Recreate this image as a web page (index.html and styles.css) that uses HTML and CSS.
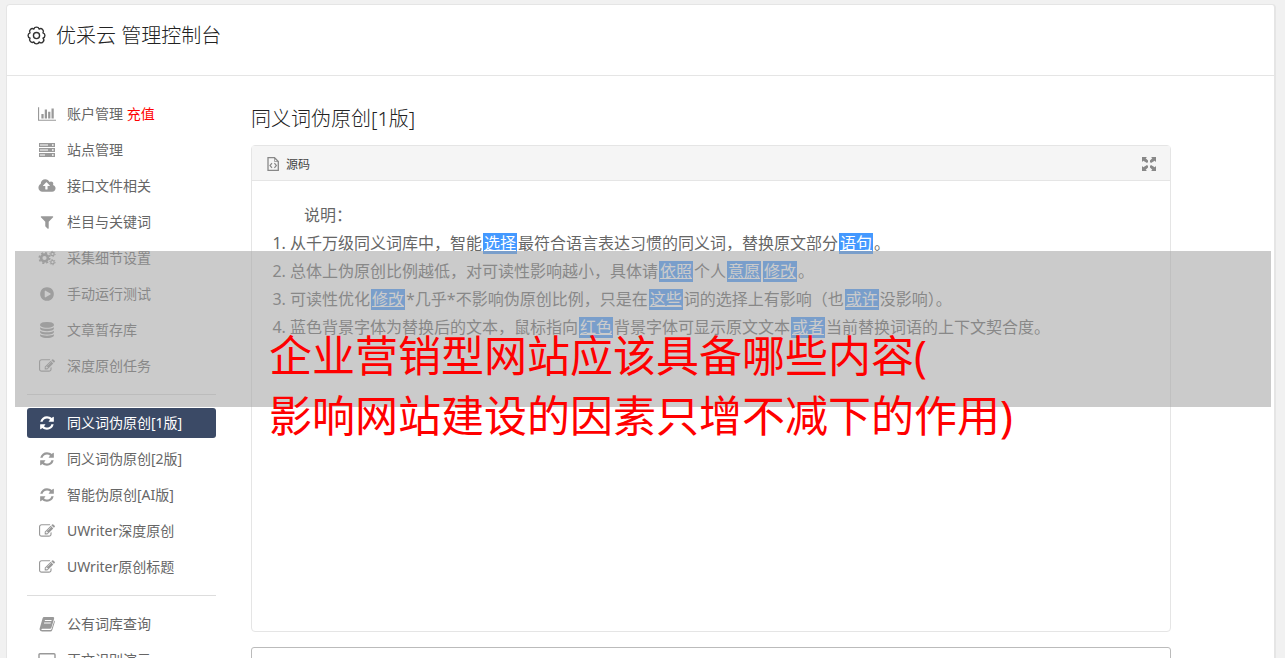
FILE: index.html
```html
<!DOCTYPE html>
<html lang="zh-CN">
<head>
    <meta charset="UTF-8">
    <meta name="viewport" content="width=device-width, initial-scale=1.0">
    <title>优采云 管理控制台</title>
    <link rel="stylesheet" href="styles.css">
</head>
<body>
<svg class="sprite" aria-hidden="true">
    <symbol id="chart" viewBox="0 0 2048 1792"><path d="M640 896v512h-256v-512h256zm384-512v1024h-256v-1024h256zm1024 1152v128h-2048v-1536h128v1408h1920zm-640-896v768h-256v-768h256zm384-384v1152h-256v-1152h256z"/></symbol>
    <symbol id="server" viewBox="0 0 18 16"><path fill-rule="evenodd" d="M1 1h16v4H1zM2 2.4h8v1.2H2zM14 2.3h1.6v1.4H14zM1 6h16v4H1zM2 7.4h8v1.2H2zM14 7.3h1.6v1.4H14zM1 11h16v4H1zM2 12.4h5v1.2H2zM14 12.3h1.6v1.4H14z"/></symbol>
    <symbol id="cloud" viewBox="0 0 1920 1792"><path d="M1280 864q0-14-9-23l-352-352q-9-9-23-9t-23 9l-351 351q-10 12-10 24 0 14 9 23t23 9h224v352q0 13 9.500 22.500t22.500 9.500h192q13 0 22.500-9.500t9.500-22.500v-352h224q13 0 22.500-9.500t9.500-22.500zm640 288q0 159-112.500 271.500t-271.500 112.500h-1088q-185 0-316.500-131.500t-131.500-316.500q0-130 70-240t188-165q-2-30-2-43 0-212 150-362t362-150q156 0 285.500 87t188.500 231q71-62 166-62 106 0 181 75t75 181q0 76-41 138 130 31 213.500 135.500t83.500 238.500z"/></symbol>
    <symbol id="filter" viewBox="0 0 1792 1792"><path d="M1595 295q17 41-14 70l-493 493v742q0 42-39 59-13 5-25 5-27 0-45-19l-256-256q-19-19-19-45v-486l-493-493q-31-29-14-70 17-39 59-39h1280q42 0 59 39z"/></symbol>
    <symbol id="cogs" viewBox="0 0 18 16">
        <g fill="none" stroke="currentColor">
            <circle cx="6.500" cy="8" r="3.400" stroke-width="2.600"/>
            <circle cx="6.500" cy="8" r="5.200" stroke-width="1.700" stroke-dasharray="2.100 1.984"/>
            <circle cx="14.500" cy="4" r="1.700" stroke-width="1.200"/>
            <circle cx="14.500" cy="4" r="2.700" stroke-width="1" stroke-dasharray="1.200 1.627"/>
            <circle cx="14.500" cy="12.200" r="1.700" stroke-width="1.200"/>
            <circle cx="14.500" cy="12.200" r="2.700" stroke-width="1" stroke-dasharray="1.200 1.627"/>
        </g>
    </symbol>
    <symbol id="play" viewBox="0 0 1792 1792"><path d="M896 128q209 0 385.500 103t279.500 279.500 103 385.500-103 385.500-279.500 279.500-385.500 103-385.500-103-279.500-279.500-103-385.500 103-385.500 279.500-279.500 385.500-103zm384 823q32-18 32-55t-32-55l-544-320q-31-19-64-1-32 19-32 56v640q0 37 32 56 16 8 32 8 17 0 32-9z"/></symbol>
    <symbol id="database" viewBox="0 0 1792 1792"><path d="M896 768q237 0 443-43t325-127v170q0 69-103 128t-280 93.500-385 34.500-385-34.500-280-93.500-103-128v-170q119 84 325 127t443 43zm0 768q237 0 443-43t325-127v170q0 69-103 128t-280 93.500-385 34.500-385-34.500-280-93.500-103-128v-170q119 84 325 127t443 43zm0-384q237 0 443-43t325-127v170q0 69-103 128t-280 93.500-385 34.500-385-34.500-280-93.500-103-128v-170q119 84 325 127t443 43zm0-1152q208 0 385 34.500t280 93.500 103 128v128q0 69-103 128t-280 93.500-385 34.500-385-34.500-280-93.500-103-128v-128q0-69 103-128t280-93.500 385-34.500z"/></symbol>
    <symbol id="edit" viewBox="0 0 1792 1792"><path d="M888 1184l116-116-152-152-116 116v56h96v96h56zm440-720q-16-16-33 1l-350 350q-17 17-1 33t33-1l350-350q17-17 1-33zm80 594v190q0 119-84.500 203.500t-203.500 84.500h-832q-119 0-203.500-84.500t-84.500-203.500v-832q0-119 84.500-203.500t203.500-84.500h832q63 0 117 25 15 7 18 23 3 17-9 29l-49 49q-14 14-32 8-23-6-45-6h-832q-66 0-113 47t-47 113v832q0 66 47 113t113 47h832q66 0 113-47t47-113v-126q0-13 9-22l64-64q15-15 35-7t20 29zm-96-738l288 288-672 672h-288v-288zm444 132l-92 92-288-288 92-92q28-28 68-28t68 28l152 152q28 28 28 68t-28 68z"/></symbol>
    <symbol id="refresh" viewBox="0 0 1792 1792"><path d="M1639 1056q0 5-1 7-64 268-268 434.500t-478 166.500q-146 0-282.500-55t-243.500-157l-129 129q-19 19-45 19t-45-19-19-45v-448q0-26 19-45t45-19h448q26 0 45 19t19 45-19 45l-137 137q71 66 161 102t187 36q134 0 250-65t186-179q11-17 53-117 8-23 30-23h192q13 0 22.500 9.500t9.500 22.500zm25-800v448q0 26-19 45t-45 19h-448q-26 0-45-19t-19-45 19-45l138-138q-148-137-349-137-134 0-250 65t-186 179q-11 17-53 117-8 23-30 23h-199q-13 0-22.500-9.500t-9.500-22.500v-7q65-268 270-434.500t480-166.500q146 0 284 55.500t245 156.500l130-129q19-19 45-19t45 19 19 45z"/></symbol>
    <symbol id="book" viewBox="0 0 16 16"><path fill-rule="evenodd" d="M5 1h9.200q1.300.2.900 1.700l-2.700 9q-.3 1-1.400 1H3.300q-1 0-.9.700.1.600 1 .6h8.100q.8 0 1.100-.9l2.700-8.600q.8.500.5 1.500l-2.500 8q-.5 1.500-2 1.500H3.200Q1 15.500.6 13.400q-.1-.8.200-1.500L3.600 2.300Q4 1 5 1zM6 4l-.3 1h6.700l.3-1zM5.200 6.500l-.3 1h6.700l.3-1z"/></symbol>
    <symbol id="monitor" viewBox="0 0 18 16"><path fill="none" stroke="currentColor" stroke-width="1.400" d="M2 1.700h14q1 0 1 1v8.600q0 1-1 1H2q-1 0-1-1V2.700q0-1 1-1zM9 12.300V15M5 15h8"/></symbol>
    <symbol id="gear" viewBox="0 0 18 18"><g fill="none" stroke="currentColor" stroke-width="1.300"><path stroke-linejoin="round" d="M15.100 11.500A2.400 2.400 0 0 1 11.500 15.100A2.600 2.600 0 0 1 6.500 15.100A2.600 2.600 0 0 1 2.900 11.500A2.600 2.600 0 0 1 2.900 6.500A2.600 2.600 0 0 1 6.500 2.900A2.600 2.600 0 0 1 11.500 2.900A2.600 2.600 0 0 1 15.100 6.500A2.600 2.600 0 0 1 15.100 11.500z"/><circle cx="9" cy="9" r="2.900"/></g></symbol>
    <symbol id="source" viewBox="0 0 12 14"><g fill="none" stroke="currentColor"><path d="M1 .7h6.500l3.800 3.800v8.800H1z" stroke-width="1.300"/><path d="M7.500 1v3.500H11" stroke-width=".7"/><path d="M5 6.200 3 8.500l2 2.300M7.400 6.200l2 2.300-2 2.300" stroke-width="1.200"/></g></symbol>
    <symbol id="expand" viewBox="0 0 14 14"><path d="M0 0h5L3.700 1.300 6 3.600V5L5 6 1.300 3.700 0 5zM14 0v5l-1.300-1.300L9 6 8 5V3.600l2.300-2.300L9 0zM0 14V9l1.300 1.300L5 8l1 1v1.400l-2.300 2.300L5 14zM14 14H9l1.300-1.300L8 10.400V9l1-1 3.700 2.300L14 9z"/></symbol>
</svg>

<div class="console">
    <header class="console-header">
        <svg class="gear"><use href="#gear"/></svg>
        <h1>优采云 管理控制台</h1>
    </header>
    <div class="console-body">
        <nav class="sidebar">
            <ul>
                <li><a href="#"><svg><use href="#chart"/></svg><span>账户管理 <em>充值</em></span></a></li>
                <li><a href="#"><svg><use href="#server"/></svg>站点管理</a></li>
                <li><a href="#"><svg><use href="#cloud"/></svg>接口文件相关</a></li>
                <li><a href="#"><svg><use href="#filter"/></svg>栏目与关键词</a></li>
                <li><a href="#"><svg><use href="#cogs"/></svg>采集细节设置</a></li>
                <li><a href="#"><svg><use href="#play"/></svg>手动运行测试</a></li>
                <li><a href="#"><svg><use href="#database"/></svg>文章暂存库</a></li>
                <li><a href="#"><svg><use href="#edit"/></svg>深度原创任务</a></li>
            </ul>
            <hr>
            <ul>
                <li><a class="active" href="#"><svg><use href="#refresh"/></svg>同义词伪原创[1版]</a></li>
                <li><a href="#"><svg><use href="#refresh"/></svg>同义词伪原创[2版]</a></li>
                <li><a href="#"><svg><use href="#refresh"/></svg>智能伪原创[AI版]</a></li>
                <li><a href="#"><svg><use href="#edit"/></svg>UWriter深度原创</a></li>
                <li><a href="#"><svg><use href="#edit"/></svg>UWriter原创标题</a></li>
            </ul>
            <hr>
            <ul>
                <li><a href="#"><svg><use href="#book"/></svg>公有词库查询</a></li>
                <li><a href="#"><svg><use href="#monitor"/></svg>正文识别演示</a></li>
            </ul>
        </nav>
        <main class="content">
            <h2>同义词伪原创[1版]</h2>
            <section class="editor">
                <div class="toolbar">
                    <button type="button" class="tool"><svg class="source"><use href="#source"/></svg>源码</button>
                    <button type="button" class="tool" aria-label="全屏"><svg class="expand"><use href="#expand"/></svg></button>
                </div>
                <div class="editor-text">
                    <p>说明：</p>
                    <ol>
                        <li>从千万级同义词库中，智能<a class="word" href="#">选择</a>最符合语言表达习惯的同义词，替换原文部分<a class="word" href="#">语句</a>。</li>
                        <li>总体上伪原创比例越低，对可读性影响越小，具体请<a class="word" href="#">依照</a>个人<a class="word" href="#">意愿</a><a class="word" href="#">修改</a>。</li>
                        <li>可读性优化<a class="word" href="#">修改</a>*几乎*不影响伪原创比例，只是在<a class="word" href="#">这些</a>词的选择上有影响（也<a class="word" href="#">或许</a>没影响）。</li>
                        <li>蓝色背景字体为替换后的文本，鼠标指向<a class="word" href="#">红色</a>背景字体可显示原文文本<a class="word" href="#">或者</a>当前替换词语的上下文契合度。</li>
                    </ol>
                </div>
            </section>
            <textarea class="result" aria-label="原文"></textarea>
        </main>
    </div>
</div>

<div class="banner">
    <p>企业营销型网站应该具备哪些内容(<br>影响网站建设的因素只增不减下的作用)</p>
</div>
</body>
</html>
```
FILE: styles.css
```css
* {
    box-sizing: border-box;
}
body {
    margin: 0;
    padding: 4px 9px 0 6px;
    height: 100vh;
    overflow: hidden;
    position: relative;
    background: #f1f1f1;
    color: #666;
    font-family: "Noto Sans", "Noto Sans CJK SC", sans-serif;
    font-size: 14px;
}
h1, h2, p, ul, ol {
    margin: 0;
    padding: 0;
}
h1, h2 {
    color: #222;
    font-size: 20px;
    font-weight: 300;
    line-height: 28px;
}
svg {
    fill: currentColor;
}
.sprite {
    position: absolute;
    width: 0;
    height: 0;
}
.console {
    background: #fff;
    border: 1px solid #e5e5e5;
    border-right-width: 2px;
    border-radius: 4px;
}
.console-header {
    display: flex;
    align-items: center;
    gap: 10px;
    height: 71px;
    padding: 0 20px 8px;
    border-bottom: 1px solid #e5e5e5;
}
.gear {
    width: 19px;
    height: 19px;
    margin-bottom: 2px;
    color: #333;
}
.console-body {
    display: flex;
    gap: 35px;
    padding: 23px 103px 0 20px;
}

/* sidebar */
.sidebar {
    flex: 0 0 189px;
}
.sidebar ul {
    list-style: none;
}
.sidebar li {
    margin-bottom: 6px;
}
.sidebar a {
    display: flex;
    align-items: center;
    gap: 11px;
    height: 30px;
    padding: 0 0 2px 11px;
    border-radius: 3px;
    color: #666;
    text-decoration: none;
}
.sidebar svg {
    width: 18px;
    height: 16px;
    margin-top: 2px;
    color: #999;
}
.sidebar em {
    color: #f00;
    font-style: normal;
}
.sidebar .active,
.sidebar .active svg {
    color: #fff;
}
.sidebar .active {
    background: #3b4a66;
}
.sidebar hr {
    height: 1px;
    margin: 13px 0;
    border: 0;
    background: #ddd;
}

/* editor */
.content {
    flex: 1;
    min-width: 0;
}
.content h2 {
    margin: 6px 0 12px;
}
.editor {
    border: 1px solid #e5e5e5;
    border-radius: 4px;
    min-height: 487px;
}
.toolbar {
    display: flex;
    justify-content: space-between;
    align-items: center;
    height: 35px;
    padding: 2px 14px 0 15px;
    background: #f5f5f5;
    border-bottom: 1px solid #e5e5e5;
}
.tool {
    display: flex;
    align-items: center;
    gap: 7px;
    padding: 0;
    border: 0;
    background: none;
    color: #444;
    font: inherit;
    font-size: 12px;
}
.tool svg {
    color: #888;
}
.source {
    width: 12px;
    height: 14px;
}
.expand {
    width: 14px;
    height: 14px;
}
.editor-text {
    padding: 20px;
    font-size: 16px;
    line-height: 28px;
}
.editor-text p {
    padding-left: 32px;
}
.editor-text ol {
    padding-left: 18px;
}
.word {
    display: inline-block;
    margin: 0 1px;
    padding: 0 1px;
    background: #49f;
    color: #fff;
    line-height: 21px;
}
.result {
    display: block;
    width: 100%;
    height: 120px;
    margin-top: 15px;
    border: 1px solid #bbb;
    border-radius: 3px;
    resize: none;
}

/* translucent strip with the article title */
.banner {
    position: absolute;
    top: 251px;
    left: 15px;
    right: 14px;
    height: 156px;
    padding: 75px 0 0 254px;
    background: rgba(162, 162, 162, .56);
}
.banner p {
    color: #f00;
    font-size: 43px;
    line-height: 60px;
    white-space: nowrap;
}
```
